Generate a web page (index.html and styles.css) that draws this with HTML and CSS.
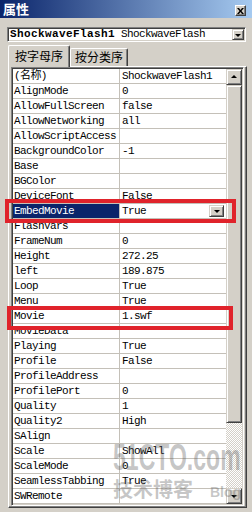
FILE: index.html
```html
<!DOCTYPE html>
<html>
<head>
  <meta charset="utf-8">
  <title>属性</title>
  <link rel="stylesheet" href="styles.css">
</head>
<body>
  <div class="window">
    <div class="titlebar">
      <span class="title">属性</span>
      <span class="close">
        <svg width="7" height="6" viewBox="0 0 7 6"><path d="M0 0h2l1.5 2 1.5-2h2l-2.5 3 2.5 3h-2l-1.5-2-1.5 2h-2l2.5-3z" fill="#000"/></svg>
      </span>
    </div>
    <div class="combo">
      <span class="combo-text"><b>ShockwaveFlash1</b> ShockwaveFlash</span>
      <span class="btn3d dropbtn"><i class="arrow down"></i></span>
    </div>
    <div class="tabs">
      <div class="tab active">按字母序</div>
      <div class="tab">按分类序</div>
    </div>
    <div class="panel">
      <div class="grid">
        <div class="rows">
          <div class="row"><div class="name">(名称)</div><div class="value">ShockwaveFlash1</div></div>
          <div class="row"><div class="name">AlignMode</div><div class="value">0</div></div>
          <div class="row"><div class="name">AllowFullScreen</div><div class="value">false</div></div>
          <div class="row"><div class="name">AllowNetworking</div><div class="value">all</div></div>
          <div class="row"><div class="name">AllowScriptAccess</div><div class="value"></div></div>
          <div class="row"><div class="name">BackgroundColor</div><div class="value">-1</div></div>
          <div class="row"><div class="name">Base</div><div class="value"></div></div>
          <div class="row"><div class="name">BGColor</div><div class="value"></div></div>
          <div class="row"><div class="name">DeviceFont</div><div class="value">False</div></div>
          <div class="row selected"><div class="name">EmbedMovie</div><div class="value">True<span class="btn3d cellbtn"><i class="arrow down"></i></span></div></div>
          <div class="row"><div class="name">FlashVars</div><div class="value"></div></div>
          <div class="row"><div class="name">FrameNum</div><div class="value">0</div></div>
          <div class="row"><div class="name">Height</div><div class="value">272.25</div></div>
          <div class="row"><div class="name">left</div><div class="value">189.875</div></div>
          <div class="row"><div class="name">Loop</div><div class="value">True</div></div>
          <div class="row"><div class="name">Menu</div><div class="value">True</div></div>
          <div class="row"><div class="name">Movie</div><div class="value">1.swf</div></div>
          <div class="row"><div class="name">MovieData</div><div class="value"></div></div>
          <div class="row"><div class="name">Playing</div><div class="value">True</div></div>
          <div class="row"><div class="name">Profile</div><div class="value">False</div></div>
          <div class="row"><div class="name">ProfileAddress</div><div class="value"></div></div>
          <div class="row"><div class="name">ProfilePort</div><div class="value">0</div></div>
          <div class="row"><div class="name">Quality</div><div class="value">1</div></div>
          <div class="row"><div class="name">Quality2</div><div class="value">High</div></div>
          <div class="row"><div class="name">SAlign</div><div class="value"></div></div>
          <div class="row"><div class="name">Scale</div><div class="value">ShowAll</div></div>
          <div class="row"><div class="name">ScaleMode</div><div class="value">0</div></div>
          <div class="row"><div class="name">SeamlessTabbing</div><div class="value">True</div></div>
          <div class="row"><div class="name">SWRemote</div><div class="value"></div></div>
        </div>
        <div class="scrollbar">
          <span class="btn3d sbtn"><i class="arrow up"></i></span>
          <span class="btn3d thumb"></span>
          <span class="track"></span>
          <span class="btn3d sbtn"><i class="arrow down"></i></span>
        </div>
      </div>
    </div>

    <div class="mark mark-embed"></div>
    <div class="mark mark-movie"></div>

    <div class="watermark">
      <div class="wm-big">51CTO.com</div>
      <div class="wm-small"><span>技术博客</span><span class="wm-blog">Blog</span></div>
    </div>
  </div>
</body>
</html>
```

FILE: styles.css
```css
html, body {
  margin: 0;
  padding: 0;
}
body {
  width: 252px;
  height: 512px;
  overflow: hidden;
}
.window {
  position: relative;
  width: 252px;
  height: 512px;
  background: #d4d0c8;
  overflow: hidden;
}

/* title bar */
.titlebar {
  height: 18px;
  display: flex;
  align-items: center;
  justify-content: space-between;
  padding: 0 6px 0 3px;
  background: linear-gradient(to right, #0a246a, #a6caf0);
}
.title {
  color: #fff;
  font: bold 13px "Noto Sans CJK SC", sans-serif;
  line-height: 18px;
}
.close {
  width: 11px;
  height: 11px;
  margin-top: 3px;
  box-sizing: border-box;
  display: flex;
  align-items: center;
  justify-content: center;
  background: #d4d0c8;
  border-top: 1px solid #fff;
  border-left: 1px solid #fff;
  border-right: 1px solid #404040;
  border-bottom: 1px solid #404040;
  box-shadow: inset -1px -1px #808080;
}

/* 3d button */
.btn3d {
  display: flex;
  align-items: center;
  justify-content: center;
  box-sizing: border-box;
  background: #d4d0c8;
  border-top: 1px solid #d4d0c8;
  border-left: 1px solid #d4d0c8;
  border-right: 1px solid #404040;
  border-bottom: 1px solid #404040;
  box-shadow: inset 1px 1px #fff, inset -1px -1px #808080;
}
.arrow {
  width: 0;
  height: 0;
  border-left: 3px solid transparent;
  border-right: 3px solid transparent;
}
.arrow.down {
  border-top: 3px solid #000;
  margin-top: 1px;
}
.arrow.up {
  border-bottom: 3px solid #000;
  margin-bottom: 1px;
}

/* object combo */
.combo {
  display: flex;
  height: 15px;
  margin: 9px 6px 0 7px;
  box-sizing: border-box;
  background: #fff;
  border-top: 1px solid #808080;
  border-left: 1px solid #808080;
  border-right: 1px solid #fff;
  border-bottom: 1px solid #fff;
  box-shadow: inset 1px 1px #404040, inset -1px -1px #d4d0c8;
}
.combo-text {
  flex: 1;
  padding-left: 2px;
  font-family: "Liberation Mono", monospace;
  font-size: 11px;
  letter-spacing: -0.6px;
  line-height: 13px;
  white-space: nowrap;
  overflow: hidden;
}
.combo-text b {
  letter-spacing: 0.4px;
}
.dropbtn {
  width: 12px;
  height: 11px;
  margin: 1px 1px 0 0;
}

/* tabs */
.tabs {
  position: relative;
  z-index: 1;
  display: flex;
  align-items: flex-end;
  height: 21px;
  margin: 3px 0 0 8px;
}
.tab {
  height: 18px;
  box-sizing: border-box;
  padding: 0 4px;
  font: 12px "Noto Sans CJK SC", sans-serif;
  line-height: 16px;
  background: #d4d0c8;
  border-top: 1px solid #fff;
  border-left: 1px solid #fff;
  border-right: 1px solid #404040;
  box-shadow: inset -1px 0 #808080;
  border-radius: 2px 2px 0 0;
}
.tab.active {
  height: 22px;
  padding: 0 6px;
  margin-bottom: -1px;
  line-height: 19px;
}

/* grid panel */
.panel {
  margin: 0 5px 0 8px;
  padding: 0 2px 1px 2px;
  border-top: 1px solid #fff;
  border-left: 1px solid #fff;
  border-right: 1px solid #404040;
  border-bottom: 1px solid #404040;
  box-shadow: inset -1px -1px #808080;
}
.grid {
  display: flex;
  background: #fff;
  border-top: 1px solid #808080;
  border-left: 1px solid #808080;
  border-right: 1px solid #fff;
  border-bottom: 1px solid #fff;
  box-shadow: inset 1px 1px #404040, inset -1px -1px #d4d0c8;
  padding: 1px;
}
.rows {
  flex: 1;
  font-family: "Liberation Mono", "Noto Sans CJK SC", monospace;
  font-size: 11px;
  letter-spacing: -0.6px;
  line-height: 15px;
  color: #000;
}
.row {
  display: flex;
  height: 15px;
  box-sizing: border-box;
  border-bottom: 1px solid #c4c0b8;
}
.name {
  width: 107px;
  box-sizing: border-box;
  padding-left: 1px;
  border-right: 1px solid #c4c0b8;
  white-space: nowrap;
  overflow: hidden;
}
.value {
  flex: 1;
  display: flex;
  justify-content: space-between;
  padding-left: 2px;
  white-space: nowrap;
  overflow: hidden;
}
.row.selected .name {
  background: #0a246a;
  color: #fff;
}
.cellbtn {
  width: 15px;
  height: 12px;
  margin: 1px 2px 0 0;
}

/* scrollbar */
.scrollbar {
  width: 16px;
  display: flex;
  flex-direction: column;
}
.sbtn {
  height: 16px;
}
.thumb {
  height: 338px;
}
.track {
  flex: 1;
  background-color: #d4d0c8;
  background-image: repeating-conic-gradient(#fff 0 25%, #d4d0c8 0 50%);
  background-size: 2px 2px;
}

/* red marks */
.mark {
  position: absolute;
  box-sizing: border-box;
  border: 4px solid #e0232b;
}
.mark-embed {
  left: 5px;
  top: 199px;
  width: 231px;
  height: 24px;
}
.mark-movie {
  left: 7px;
  top: 306px;
  width: 226px;
  height: 24px;
}

/* watermark */
.watermark {
  position: absolute;
  left: 113px;
  top: 438px;
  width: 128px;
  color: rgba(90, 90, 90, 0.35);
  pointer-events: none;
}
.wm-big {
  font: bold 36px "Liberation Sans", sans-serif;
  line-height: 40px;
  transform: scaleX(0.64);
  transform-origin: left top;
  white-space: nowrap;
}
.wm-small {
  display: flex;
  align-items: baseline;
  justify-content: space-between;
  font: bold 20px "Noto Sans CJK SC", sans-serif;
  line-height: 22px;
}
.wm-blog {
  font: bold 14px "Liberation Sans", sans-serif;
}
```
